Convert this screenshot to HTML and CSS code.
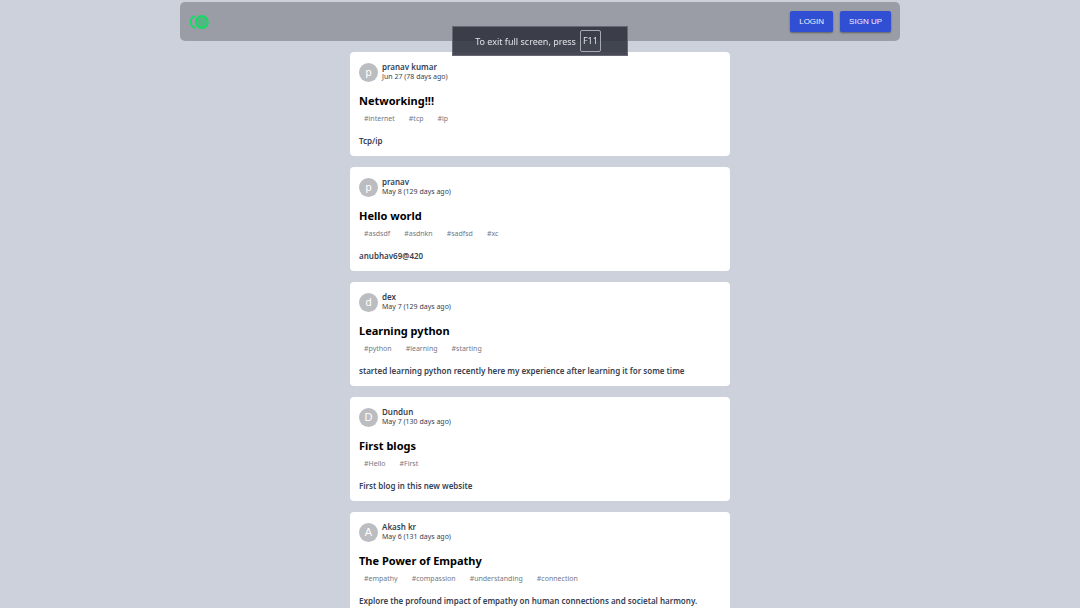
FILE: index.html
```html
<!DOCTYPE html>
<html lang="en">
<head>
<meta charset="utf-8">
<title>Blogs</title>
<link rel="stylesheet" href="styles.css">
</head>
<body>
<header class="navbar">
  <a class="logo" href="#" aria-label="Home">
    <svg width="20" height="16" viewBox="0 0 20 16" fill="none" stroke="#12dc64" stroke-width="1.8">
      <path d="M5.2 2.4A6.2 6.2 0 0 0 5.2 13.6" stroke-linecap="round"/>
      <circle cx="12.8" cy="8" r="6" fill="#55b582"/>
    </svg>
  </a>
  <nav class="actions">
    <button class="btn" type="button">LOGIN</button>
    <button class="btn" type="button">SIGN UP</button>
  </nav>
</header>
<div class="toast" role="status">To exit full screen, press <kbd class="key">F11</kbd></div>
<main class="feed">
  <article class="card">
    <div class="author"><span class="avatar">p</span><div><p class="name">pranav kumar</p><p class="date">Jun 27 (78 days ago)</p></div></div>
    <h2 class="title">Networking!!!</h2>
    <ul class="tags"><li>#internet</li><li>#tcp</li><li>#ip</li></ul>
    <p class="summary">Tcp/ip</p>
  </article>
  <article class="card">
    <div class="author"><span class="avatar">p</span><div><p class="name">pranav</p><p class="date">May 8 (129 days ago)</p></div></div>
    <h2 class="title">Hello world</h2>
    <ul class="tags"><li>#asdsdf</li><li>#asdnkn</li><li>#sadfsd</li><li>#xc</li></ul>
    <p class="summary">anubhav69@420</p>
  </article>
  <article class="card">
    <div class="author"><span class="avatar">d</span><div><p class="name">dex</p><p class="date">May 7 (129 days ago)</p></div></div>
    <h2 class="title">Learning python</h2>
    <ul class="tags"><li>#python</li><li>#learning</li><li>#starting</li></ul>
    <p class="summary">started learning python recently here my experience after learning it for some time</p>
  </article>
  <article class="card">
    <div class="author"><span class="avatar">D</span><div><p class="name">Dundun</p><p class="date">May 7 (130 days ago)</p></div></div>
    <h2 class="title">First blogs</h2>
    <ul class="tags"><li>#Hello</li><li>#First</li></ul>
    <p class="summary">First blog in this new website</p>
  </article>
  <article class="card">
    <div class="author"><span class="avatar">A</span><div><p class="name">Akash kr</p><p class="date">May 6 (131 days ago)</p></div></div>
    <h2 class="title">The Power of Empathy</h2>
    <ul class="tags"><li>#empathy</li><li>#compassion</li><li>#understanding</li><li>#connection</li></ul>
    <p class="summary">Explore the profound impact of empathy on human connections and societal harmony.</p>
  </article>
</main>
</body>
</html>
```
FILE: styles.css
```css
* { box-sizing: border-box; margin: 0; padding: 0; }
html { scrollbar-width: none; }
body {
  padding: 2px 0 11px;
  background: #cdd1db;
  color: #374151;
  font-family: "Noto Sans", sans-serif;
}
.navbar {
  display: flex;
  align-items: center;
  justify-content: space-between;
  width: 100%;
  max-width: 720px;
  margin: 0 auto;
  padding: 9px;
  border-radius: 5px;
  background: #9a9da5;
}
.logo { display: flex; }
.actions { display: flex; gap: 7px; }
.btn {
  padding: 0 9px;
  border: 0;
  border-radius: 2px;
  background: #304fd3;
  box-shadow: 0 1px 2px rgba(0, 0, 0, 0.4);
  color: #f0f2fb;
  font: 8px/21px "Liberation Sans", sans-serif;
  cursor: pointer;
}
.toast {
  position: fixed;
  top: 26px;
  left: 50%;
  transform: translateX(-50%);
  display: flex;
  align-items: center;
  justify-content: center;
  gap: 4px;
  width: 176px;
  height: 30px;
  padding-right: 4px;
  border: 1px solid #666973;
  background: rgba(46, 49, 60, 0.88);
  color: #dfe1e7;
  font-size: 9px;
  white-space: nowrap;
}
.key {
  padding: 0 2px;
  border: 1px solid #a7aab3;
  border-radius: 2px;
  font: inherit;
  line-height: 20px;
}
.feed {
  display: grid;
  gap: 11px;
  width: 100%;
  max-width: 380px;
  margin: 11px auto 0;
}
.card {
  padding: 10px 9px 8px;
  border-radius: 4px;
  background: #fff;
}
.author { display: flex; align-items: center; gap: 4px; }
.avatar {
  width: 19px;
  border-radius: 50%;
  background: #bcbdc1;
  color: #fff;
  font: 11px/19px "Liberation Sans", sans-serif;
  text-align: center;
}
.name { font-size: 8px; font-weight: 600; line-height: 10px; }
.date { font-size: 7px; line-height: 10px; }
.title { margin-top: 10px; color: #000; font-size: 11px; font-weight: 700; line-height: 18px; }
.tags {
  display: flex;
  gap: 14px;
  margin-top: 2px;
  padding-left: 5px;
  color: #737985;
  font-size: 7px;
  line-height: 14px;
  list-style: none;
}
.summary { margin-top: 8px; font-size: 8px; font-weight: 600; line-height: 14px; }
```
